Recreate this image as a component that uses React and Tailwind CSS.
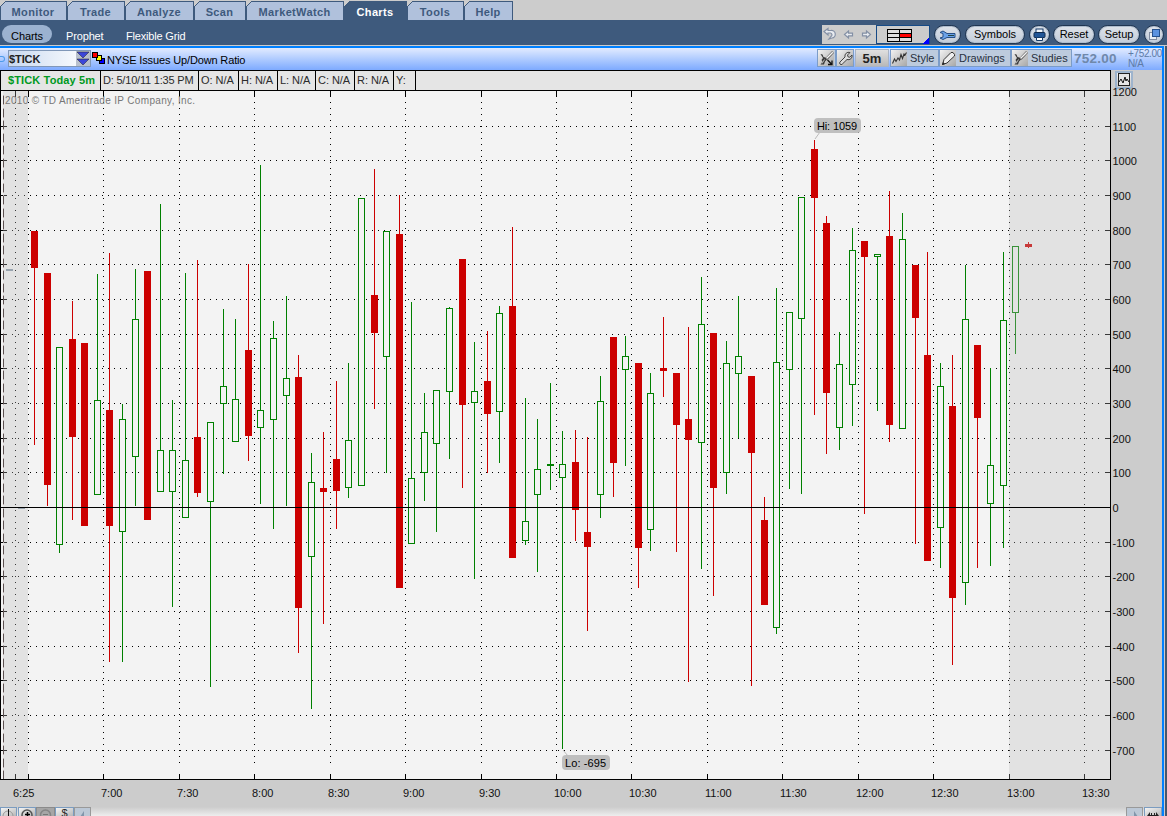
import React from "react";

// [center x, high, low, body top, body bottom, rising]
const CANDLES = [
  [34,231,445,231,268,0],[47,273,506,273,485,0],[59,347,553,347,545,1],[72,301,520,339,437,0],
  [84,343,526,343,526,0],[97,274,495,400,495,1],[109,253,662,410,526,0],[122,404,662,419,532,1],
  [135,269,506,319,457,1],[147,271,520,271,520,0],[160,204,492,450,492,1],[172,400,607,450,492,1],
  [185,273,518,460,518,1],[197,260,497,437,493,0],[210,422,687,422,502,1],[223,309,474,386,404,1],
  [235,319,442,399,442,1],[248,264,461,350,436,0],[260,165,504,410,428,1],[273,321,529,338,420,1],
  [286,296,506,378,396,1],[298,355,653,377,608,0],[311,453,709,482,557,1],[323,432,624,488,492,0],
  [336,381,529,459,491,0],[348,363,498,440,488,1],[361,198,486,198,486,1],[374,169,409,295,333,0],
  [386,231,473,231,357,1],[399,195,588,234,588,0],[411,302,544,478,544,1],[424,393,501,432,473,1],
  [436,390,532,390,444,1],[449,307,459,308,392,1],[462,259,488,259,405,0],[474,342,579,391,403,1],
  [487,331,473,381,414,0],[499,306,463,313,412,1],[512,227,558,306,558,0],[525,398,545,521,541,1],
  [537,419,572,469,495,1],[550,383,490,464,466,1],[562,431,749,464,478,1],[575,430,541,462,510,0],
  [587,437,631,532,547,0],[600,376,518,401,495,1],[613,337,497,337,463,0],[625,336,466,356,370,1],
  [638,363,588,363,548,0],[650,373,551,393,530,1],[663,317,397,368,371,0],[676,373,552,373,425,0],
  [688,327,682,419,440,0],[701,277,569,324,443,1],[713,333,596,333,488,0],[726,341,494,363,473,1],
  [738,296,438,356,374,1],[751,376,686,376,453,0],[764,497,605,520,605,0],[776,288,634,362,628,1],
  [789,312,489,312,370,1],[801,197,494,197,319,1],[814,140,415,149,198,0],[826,216,454,223,393,0],
  [839,332,450,364,428,1],[852,228,426,250,385,1],[864,241,514,241,257,0],[877,254,411,254,257,1],
  [889,191,442,236,425,0],[902,213,429,239,429,1],[915,265,544,265,318,0],[927,252,561,355,561,0],
  [940,363,568,386,528,1],[952,355,665,406,598,0],[965,265,605,319,583,1],[977,345,568,345,418,0],
  [990,368,566,465,504,1],[1003,252,548,320,486,1],[1015,246,354,246,313,1],[1028,242,248,244,247,0],
];

const LEVELS = [
  [1200,91],[1100,126],[1000,160],[900,195],[800,230],[700,264],[600,299],[500,334],[400,368],[300,403],
  [200,438],[100,472],[0,507],[-100,542],[-200,576],[-300,611],[-400,646],[-500,680],[-600,715],[-700,750],
];

const TIMES = [
  ["6:25",15],["",28],["7:00",103],["7:30",179],["8:00",254],["8:30",330],["9:00",405],["9:30",481],["10:00",556],
  ["10:30",631],["11:00",707],["11:30",782],["12:00",858],["12:30",933],["13:00",1009],["13:30",1084],
];

function Candle({ c }) {
  const [x, hi, lo, top, bot, up] = c;
  const color = up ? "#008000" : "#cc0000";
  return (
    <g fill={color}>
      <rect x={x} y={hi} width="1" height={lo - hi} />
      <rect x={x - 3} y={top} width="7" height={bot - top} />
      {up && bot - top > 2 ? <rect x={x - 2} y={top + 1} width="5" height={bot - top - 2} fill="#f3f3f3" /> : null}
    </g>
  );
}

function Chart() {
  return (
    <svg width="1162" height="716" viewBox="0 91 1162 716" className="block overflow-visible" fontFamily="'Liberation Sans', Arial, sans-serif" fontSize="11" shapeRendering="crispEdges">
      <rect x="0" y="91" width="1110" height="688" fill="#f3f3f3" />
      <g stroke="#000" strokeWidth="1">
        {LEVELS.slice(1).filter((l) => l[0] !== 0).map(([v, y]) => (
          <g key={v}>
            <line x1="12" x2="1104" y1={y + 0.5} y2={y + 0.5} strokeDasharray="1 5" />
            <line x1="1" x2="7" y1={y + 0.5} y2={y + 0.5} />
            <line x1="1105" x2="1110" y1={y + 0.5} y2={y + 0.5} />
          </g>
        ))}
        {TIMES.map(([t, x]) => (
          <g key={x}>
            <line x1={x + 0.5} x2={x + 0.5} y1="102" y2="768" strokeDasharray="1 5" />
            <line x1={x + 0.5} x2={x + 0.5} y1="91" y2="97" />
            <line x1={x + 0.5} x2={x + 0.5} y1="774" y2="779" />
          </g>
        ))}
      </g>
      {CANDLES.map((c) => <Candle key={c[0]} c={c} />)}
      <rect x="6" y="269" width="7" height="2" fill="#8899a8" />
      <rect x="18" y="508" width="7" height="1" fill="#8899a8" />
      <rect x="3" y="91" width="25" height="688" fill="#bebebe" fillOpacity=".3" />
      <rect x="1009" y="91" width="101" height="688" fill="#bebebe" fillOpacity=".3" />
      <line x1="3.5" x2="3.5" y1="95" y2="779" stroke="#b3a5a5" strokeDasharray="10 2.5" />
      <line x1="3.5" x2="3.5" y1="96" y2="779" stroke="#5c5050" strokeDasharray="8 4.5" />
      <rect x="0" y="91" width="1" height="688" fill="#000" />
      <rect x="0" y="507" width="1110" height="1" fill="#000" />
      <rect x="1110" y="70" width="1" height="710" fill="#000" />
      <rect x="0" y="779" width="1111" height="1" fill="#000" />

      <text x="5" y="104" fontSize="10" fill="#777" textLength="190">2010 © TD Ameritrade IP Company, Inc.</text>

      <g shapeRendering="auto">
        <path d="M815 139l5-7M563 750l5 6" stroke="#bbb" />
        <rect x="814" y="118" width="47" height="15" rx="4" fill="#bfbfbf" />
        <text x="817" y="130" textLength="40">Hi: 1059</text>
        <rect x="562" y="755" width="48" height="15" rx="4" fill="#bfbfbf" />
        <text x="565" y="767" textLength="41">Lo: -695</text>
      </g>
      {LEVELS.map(([v, y]) => (
        <text key={v} x="1112.5" y={y + 5} fill="#111">{v}</text>
      ))}
      {TIMES.map(([t, x]) => (
        <text key={x} x={x - 2} y="797" fill="#111">{t}</text>
      ))}
    </svg>
  );
}

const TABS = [["Monitor",67],["Trade",58],["Analyze",69],["Scan",52],["MarketWatch",98],["Charts",63],["Tools",57],["Help",49]];

function Tab({ label, width, active }) {
  const w = width;
  return (
    <div className={"relative h-[20px] shrink-0 " + (active ? "text-white" : "text-[#3e5a7d]")} style={{ width: w }}>
      <svg className="absolute inset-0" width={w} height="20" shapeRendering="crispEdges">
        <path d={`M0.5 20V6.5L5.500 1.500H${w - 0.5}V20`} fill={active ? "#3e5a7d" : "#b0c1dc"} stroke="#3e5a7d" />
      </svg>
      <div className="relative pt-[5px] pr-px text-center text-[11px] leading-[14px] font-bold tracking-[0.35px]">{label}</div>
    </div>
  );
}

function Pill({ width, gap, children }) {
  return (
    <div className="flex h-[19px] shrink-0 items-center justify-center rounded-full border border-[#1f3450] bg-linear-to-b from-[#dde2e9] to-[#c3ccd9] text-[11px] leading-none text-black shadow-[inset_0_0_0_1px_#aebccd]" style={{ width, marginLeft: gap }}>
      {children}
    </div>
  );
}

function ToolButton({ width, gap = 0, icon, label }) {
  return (
    <div className="flex h-[18px] shrink-0 items-center border border-[#7b9cc8] bg-[#bdcbdd] text-[11px] leading-none text-[#27313d]" style={{ width, marginLeft: gap }}>
      <span className="flex h-4 w-[16px] shrink-0 items-center justify-center bg-linear-to-br from-[#f2f2f2] to-[#a8a8a8]">{icon}</span>
      {label ? <span className="mt-px ml-[3px]">{label}</span> : null}
    </div>
  );
}

const Brush = ({ arrow }) => (
  <svg width="15" height="15" fill="none">
    <path d="M14 1L7.500 8" strokeWidth="2.600" stroke="#666" />
    <path d="M13.800 1.200L7.500 7.500" stroke="#f4f4f4" strokeWidth="1.300" />
    <path d="M1.500 3l2 .5 1 2.500 2 .5 1.500 2-2 2-1 3H1.500l2-3L2.500 9 4 7z" fill="#3a3a3a" />
    <path d="M3 12.500l2.500-4" stroke="#ddd" strokeWidth=".8" />
    {arrow ? <path d="M8.500 9l4 4M13 9.500V13.500H9" strokeWidth="1.300" stroke="#111" /> : null}
  </svg>
);

const Wrench = () => (
  <svg width="15" height="15" fill="none">
    <path d="M2 13a1.500 1.500 0 0 1 0-2l5-5a3.800 3.800 0 0 1 5-4.500L9.500 4l.5 1.800 1.800.5L14 4a3.800 3.800 0 0 1-5 4.500l-4.800 4.700a1.500 1.500 0 0 1-2.200-.2z" fill="#ddd" stroke="#444" />
  </svg>
);

const Squiggle = () => (
  <svg width="15" height="14" fill="none"><path d="M.5 12.500L2.500 8l1.500 2.500L6 7l1.500 2L9 3.500l1.500 4L12 3l1 1 1.500-2.500" stroke="#333" strokeWidth="1.100" /></svg>
);

const Pencil = () => (
  <svg width="15" height="15"><path d="M1.500 13.500l1.500-5L10 1.500h2l1.500 2V5L6 12z" fill="#eee" stroke="#333" /><path d="M1.500 13.500l2-.5-1.200-1.500z" fill="#222" stroke="#222" strokeWidth=".7" /></svg>
);

function TopBar() {
  return (
    <div className="flex h-[25px] bg-[#3e5a7d] text-[11px] text-white">
      <div className="mt-[5px] ml-[2px] h-[18px] w-[50px] rounded-full bg-[#9bb2d0] pt-px text-center leading-[20px] text-black tracking-[-0.1px]">Charts</div>
      <div className="ml-[14px] w-[60px] pt-[5px] leading-[22px] tracking-[-0.15px]">Prophet</div>
      <div className="pt-[5px] leading-[22px] tracking-[-0.18px]">Flexible Grid</div>
      <div className="mt-[5px] mr-[3px] ml-auto flex">
        <div className="flex h-[19px] w-[54px] items-center justify-around bg-[#ccc]">
          <svg width="54" height="19" fill="none" stroke="#8490a5" strokeWidth="1.200">
            <path d="M2 6.500l4-3v2h3a3.700 3.700 0 0 1 1 7.500l-3 1 2-2.500a1.900 1.900 0 0 0-.5-3.500H6v2z" fill="#e8ebf0" />
            <path d="M22.500 9.500l4-3.500v2.200h4v2.600h-4V13zM48.500 9.500l-4-3.500v2.200h-4v2.600h4V13z" fill="#e8ebf0" />
          </svg>
        </div>
        <svg width="55" height="19" shapeRendering="crispEdges">
          <rect x=".5" y=".5" width="53" height="18" fill="#ccc" stroke="#164a86" />
          <rect x="11.500" y="4.500" width="24" height="12" fill="#ddd" stroke="#000" />
          <rect x="24" y="9" width="11" height="3" fill="#f00" />
          <path d="M11.500 8.500h24M11.500 12.500h24M23.500 4.500v12" stroke="#000" />
          <path d="M46 19l7-7v7z" fill="#00f" />
        </svg>
        <Pill width={27} gap={3}>
          <svg width="18" height="12"><path d="M1 3.500l3-1.500 4 2.500h8v4H8L4 10.500 1 9l3-1V4.500z" fill="#6ba2e8" stroke="#254e86" /><path d="M9 6.500h6" stroke="#244" /></svg>
        </Pill>
        <Pill width={60} gap={4}>Symbols</Pill>
        <Pill width={21} gap={4}>
          <svg width="13" height="13"><rect x="3" y="1" width="7" height="4" fill="#f3f6fa" stroke="#123968" /><rect x="1" y="4.500" width="11" height="5" rx="1" fill="#225697" stroke="#102a4d" /><path d="M3.500 9.500h6v3h-6z" fill="#fff" stroke="#123968" /></svg>
        </Pill>
        <Pill width={42} gap={3}>Reset</Pill>
        <Pill width={42} gap={3}>Setup</Pill>
        <Pill width={20} gap={4}>
          <svg width="13" height="13"><rect x="1.500" y="4.500" width="7" height="7" fill="#e9eef5" stroke="#7f8ba0" /><rect x="4.500" y="1.500" width="7" height="7" fill="#5b92df" stroke="#24508d" /></svg>
        </Pill>
      </div>
    </div>
  );
}

function SymbolBar() {
  return (
    <div className="flex h-[22px] bg-linear-to-b from-[#e2ebff] to-[#7eaaff] text-[11px]">
      <div className="mt-[8px] h-[6px] w-[5px] rounded-r-full border border-l-0 border-[#4c9bea]" />
      <div className="mt-[2px] ml-[3px] flex h-[17px] w-[83px] border border-[#8097b8] bg-linear-to-r from-[#c9d9f0] to-white font-bold leading-[16px] text-[#222]">
        <span className="w-[67px] tracking-[-0.1px]">$TICK</span>
        <svg width="14" height="15" className="bg-[#b8c0cd]">
          <path d="M1 1h12L7 7zM1 8h12L7 14z" fill="#3b46d8" stroke="#222" strokeWidth=".5" />
        </svg>
      </div>
      <svg width="15" height="16" className="mt-[3px] ml-px" shapeRendering="crispEdges" stroke="#000">
        <rect x="7.500" y="7.500" width="5" height="5" fill="#00f" />
        <rect x="4.500" y="4.500" width="5" height="5" fill="#ff0" />
        <rect x=".5" y="1.500" width="5" height="5" fill="#f00" />
      </svg>
      <div className="pt-[5px] leading-[15px] tracking-[-0.14px]">NYSE Issues Up/Down Ratio</div>
      <div className="mt-px ml-auto flex">
        <ToolButton width={19} icon={<Brush arrow />} />
        <ToolButton width={18} icon={<Wrench />} />
        <div className="ml-px flex h-[18px] w-[34px] items-center justify-center border border-[#a9b4c4] bg-linear-to-b from-[#e0e0e0] to-[#b9b9b9] text-[13px] leading-none font-bold text-[#222]">5m</div>
        <ToolButton width={49} gap={1} icon={<Squiggle />} label="Style" />
        <ToolButton width={72} gap={0} icon={<Pencil />} label="Drawings" />
        <ToolButton width={61} gap={0} icon={<Brush />} label="Studies" />
        <div className="w-[56px] pl-[2px] text-[13.500px] leading-[20px] font-bold tracking-[0.25px] text-[#6f88ab]">752.00</div>
        <div className="w-[34px] text-[10px] leading-[10px] tracking-[-0.35px] whitespace-nowrap text-[#5e7ba6]">+752.00<br />N/A</div>
      </div>
    </div>
  );
}

const INFO = [["D: 5/10/11 1:35 PM",98],["O: N/A",40],["H: N/A",39],["L: N/A",38],["C: N/A",39],["R: N/A",39],["Y:",22]];

function InfoRow() {
  return (
    <div className="flex h-[21px]">
      <div className="flex h-[21px] w-[1111px] border-y border-l border-black bg-[#e5e5e5] text-[11px] leading-[19px] text-[#2b2b2b]">
        <div className="w-[100px] border-r border-black pl-[7px] font-bold tracking-[0.13px] whitespace-nowrap text-[#009922]">$TICK Today 5m</div>
        {INFO.map(([t, w]) => (
          <div key={t} className={"shrink-0 border-r border-black pl-[2px] whitespace-nowrap " + (w > 50 ? "tracking-[-0.2px]" : "tracking-[-0.05px]")} style={{ width: w }}>{t}</div>
        ))}
      </div>
      <div className="mt-[1px] ml-[4px] h-[18px] w-[18px] border-2 border-[#9eb4cd] bg-linear-to-b from-[#f2f2f2] to-[#c5c5c5]">
        <svg width="14" height="14" fill="none"><rect x="1.500" y=".5" width="11" height="12" stroke="#222" fill="#e6e6e6" /><path d="M2 9l2-3 2 4 2-6 1 4 1-2 2 3" stroke="#111" /></svg>
      </div>
    </div>
  );
}

function ScrollButton({ width, gap, dim, children }) {
  return (
    <div className={"h-[9px] shrink-0 overflow-hidden border border-b-0 " + (dim ? "border-[#999] bg-[#bcc8d6]" : "border-[#7b9cc0] bg-linear-to-br from-[#f4f4f4] to-[#b8b8b8]")} style={{ width, marginLeft: gap }}>
      {children}
    </div>
  );
}

function BottomStrip() {
  return (
    <div className="flex h-[9px] bg-linear-to-b from-[#ccc] to-[#eee]">
      <ScrollButton width={17} gap={0}><svg width="15" height="9" fill="none"><circle cx="7" cy="8" r="5" stroke="#999" /><path d="M7.500 1v8" stroke="#111" /></svg></ScrollButton>
      <ScrollButton width={18} gap={1}><svg width="16" height="9" fill="none"><circle cx="8" cy="7" r="5" stroke="#555" strokeWidth="1.500" /><path d="M8.500 4v5M6 6.500h5" stroke="#000" strokeWidth="1.500" /></svg></ScrollButton>
      <div className="w-[19px] border border-b-0 border-[#8b8b8b] bg-[#a6a6a6]"><svg width="17" height="8" fill="none"><circle cx="8.500" cy="7" r="5" stroke="#858585" strokeWidth="1.500" /><path d="M6 6.500h5" stroke="#777" /></svg></div>
      <ScrollButton width={19} gap={0}><div className="text-center text-[11px] leading-[11px] text-[#222]">$</div></ScrollButton>
      <ScrollButton width={17} gap={0} dim><svg width="15" height="9"><path d="M9 3v6H5z" fill="#8195aa" /></svg></ScrollButton>
      <div className="flex-1" />
      <ScrollButton width={17} gap={0} dim><svg width="15" height="9"><path d="M7 3v6h4z" fill="#8195aa" /></svg></ScrollButton>
      <ScrollButton width={18} gap={1}><svg width="16" height="9"><path d="M2 8l3-4v3h1V5h1v2h2V5h1v2h1V4l3 4v1H2z" fill="#222" /></svg></ScrollButton>
    </div>
  );
}

export default function App() {
  return (
    <div className="flex h-[816px] w-[1167px] flex-col overflow-hidden bg-[#ccc] font-['Liberation_Sans',Arial,sans-serif] text-black">
      <div className="flex h-[20px]">
        {TABS.map(([l, w]) => <Tab key={l} label={l} width={w} active={l === "Charts"} />)}
      </div>
      <TopBar />
      <div className="mt-px flex flex-1">
        <div className="flex w-[1164px] flex-col border-t-2 border-r-2 border-[#0080ff]">
          <SymbolBar />
          <InfoRow />
          <Chart />
          <BottomStrip />
        </div>
        <div className="ml-px w-[2px] bg-[#45566c]" />
      </div>
    </div>
  );
}
